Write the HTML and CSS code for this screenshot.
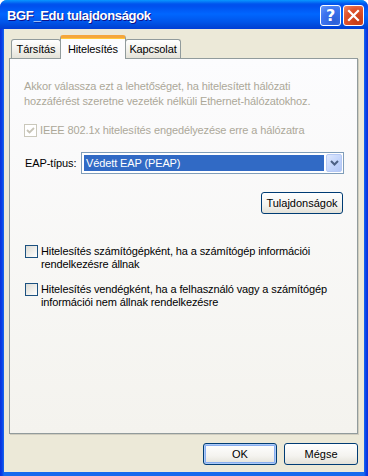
FILE: index.html
```html
<!DOCTYPE html>
<html>
<head>
<meta charset="utf-8">
<link rel="stylesheet" href="styles.css">
</head>
<body>
<div class="window">
  <div class="titlebar">
    <span class="title">BGF_Edu tulajdonságok</span>
    <div class="tbtns">
      <div class="tbtn help">?</div>
      <div class="tbtn close">
        <svg width="13" height="13" viewBox="0 0 13 13"><path d="M2 2 L11 11 M11 2 L2 11" stroke="#fff" stroke-width="2.2" stroke-linecap="square"/></svg>
      </div>
    </div>
  </div>
  <div class="client">
    <div class="tabs">
      <div class="tab t1">Társítás</div>
      <div class="tab active">Hitelesítés</div>
      <div class="tab t3">Kapcsolat</div>
    </div>
    <div class="panel">
      <p class="desc">Akkor válassza ezt a lehetőséget, ha hitelesített hálózati hozzáférést szeretne vezeték nélküli Ethernet-hálózatokhoz.</p>
      <div class="check disabled">
        <span class="box"><svg width="11" height="11" viewBox="0 0 11 11"><path d="M2 5 L4.5 7.5 L9 3" fill="none" stroke="#c7c4b7" stroke-width="1.8"/></svg></span>
        <span class="label">IEEE 802.1x hitelesítés engedélyezése erre a hálózatra</span>
      </div>
      <div class="eap">
        <span class="eaplabel">EAP-típus:</span>
        <div class="select">
          <span class="selval">Védett EAP (PEAP)</span>
          <span class="arrow"><svg width="9" height="6" viewBox="0 0 9 6"><path d="M1 1 L4.5 4.5 L8 1" fill="none" stroke="#4d6185" stroke-width="2"/></svg></span>
        </div>
      </div>
      <div class="propsrow"><button class="btn props">Tulajdonságok</button></div>
      <div class="check opt first">
        <span class="box"></span>
        <span class="label">Hitelesítés számítógépként, ha a számítógép információi rendelkezésre állnak</span>
      </div>
      <div class="check opt">
        <span class="box"></span>
        <span class="label">Hitelesítés vendégként, ha a felhasználó vagy a számítógép információi nem állnak rendelkezésre</span>
      </div>
    </div>
    <div class="footer">
      <button class="btn dlg default">OK</button>
      <button class="btn dlg">Mégse</button>
    </div>
  </div>
</div>
</body>
</html>
```

FILE: styles.css
```css
* { box-sizing: border-box; }
html, body { margin: 0; padding: 0; }
body {
  width: 368px; height: 476px; overflow: hidden;
  font-family: "Liberation Sans", Arial, sans-serif;
  font-size: 11px;
  letter-spacing: -0.12px;
}
.window {
  width: 368px; height: 476px;
  display: flex; flex-direction: column;
  background: linear-gradient(to right, #0831d9 0, #0a3fe8 2px, #166aee 4px, #166aee 364px, #0a3fe8 366px, #0831d9 368px);
  border-radius: 7px 7px 0 0;
  overflow: hidden;
}
.titlebar {
  height: 29px; flex: none;
  display: flex; align-items: center; justify-content: space-between;
  padding: 0 4px 0 7px;
  background: linear-gradient(to bottom, #0997ff 0, #0053ee 4px, #0050ee 6px, #06f 14px, #0055ea 22px, #0048d9 26px, #003dd7 29px);
}
.title {
  color: #fff; font-weight: bold; font-size: 13px;
  font-family: "Liberation Sans", sans-serif; letter-spacing: -0.35px;
  text-shadow: 1px 1px 0 #0f1089;
  margin-top: 1px;
}
.tbtns { display: flex; gap: 2px; margin-top: 1px; }
.tbtn {
  width: 21px; height: 21px; border: 1px solid #fff; border-radius: 3px;
  display: flex; align-items: center; justify-content: center;
  color: #fff; font-weight: bold; font-size: 16px;
  font-family: "DejaVu Sans", sans-serif;
}
.help { background: radial-gradient(circle at 70% 80%, #2c5fd6 0, #3d74f0 60%, #6b9bf8 100%); }
.close { background: radial-gradient(circle at 70% 80%, #c43a14 0, #e0532c 60%, #ef8a6a 100%); }
.client {
  flex: 1; margin: 0 4px 4px; background: #ece9d8;
  display: flex; flex-direction: column;
  padding: 6px 6px 7px 5px;
}
.tabs { display: flex; align-items: flex-end; padding-left: 2px; height: 23px; position: relative; z-index: 1; }
.tab {
  height: 19px; padding: 3px 0 0 0; text-align: center;
  border: 1px solid #919b9c; border-bottom: none; border-radius: 3px 3px 0 0;
  background: linear-gradient(to bottom, #fff, #f0efea 60%, #e4e2d8);
  color: #000;
}
.t1 { width: 50px; }
.t3 { width: 56px; }
.tab.active {
  width: 66px;
  height: 24px; padding: 5px 0 0 0; margin: 0 -1px -1px -1px;
  border-top: 3px solid #f5a63c; border-radius: 3px 3px 0 0;
  background: #fcfcfe;
  position: relative; z-index: 2;
  box-shadow: inset 0 1px 0 #ffc83c;
}
.panel {
  width: 349px; height: 376px; flex: none;
  border: 1px solid #919b9c;
  background: linear-gradient(to bottom, #fcfcfe, #f4f3ee);
  box-shadow: 1px 1px 0 #d0cdbf;
  padding: 20px 12px 0 14px;
}
.desc { margin: 0; color: #aca899; line-height: 15px; width: 300px; }
.check { display: flex; align-items: flex-start; }
.box {
  width: 13px; height: 13px; flex: none; border: 1px solid #1c5180;
  background: linear-gradient(135deg, #dcdbd5, #f5f4f1 70%, #fff);
  display: flex; align-items: center; justify-content: center;
}
.check .label { margin-left: 3px; line-height: 13px; }
.check.disabled { margin-top: 15px; align-items: center; }
.check.disabled .box { border-color: #cac8bb; background: #fff; }
.check.disabled .label { color: #aca899; }
.eap { display: flex; align-items: center; margin-top: 15px; }
.eaplabel { width: 57px; flex: none; padding-left: 1px; }
.select {
  width: 263px; height: 22px; border: 1px solid #7f9db9; background: #fff;
  display: flex; align-items: center; padding: 2px 1px 2px 2px;
}
.selval {
  flex: 1; height: 16px; background: #316ac5; color: #fff;
  padding-left: 2px; line-height: 16px;
}
.arrow {
  width: 16px; height: 18px; margin-left: 2px;
  border: 1px solid #b6c9f5; border-radius: 2px;
  background: linear-gradient(135deg, #dee8fd, #c1d3fb 60%, #b4c8f6);
  display: flex; align-items: center; justify-content: center;
}
.propsrow { display: flex; justify-content: flex-end; margin-top: 18px; padding-right: 2px; }
.btn {
  font: inherit; color: #000;
  height: 22px; padding: 0;
  border: 1px solid #003c74; border-radius: 3px;
  background: linear-gradient(to bottom, #fff, #f4f3ef 60%, #e3e1d8);
}
.btn.props { width: 82px; }
.check.opt { margin-left: 1px; }
.check.opt.first { margin-top: 31px; }
.check.opt + .check.opt { margin-top: 12px; }
.footer { display: flex; justify-content: flex-end; gap: 7px; margin-top: auto; }
.btn.dlg { width: 74px; }
.btn.default { box-shadow: inset 0 0 0 1px #aecbf8, inset 0 0 0 2px #88aef0; }
```
